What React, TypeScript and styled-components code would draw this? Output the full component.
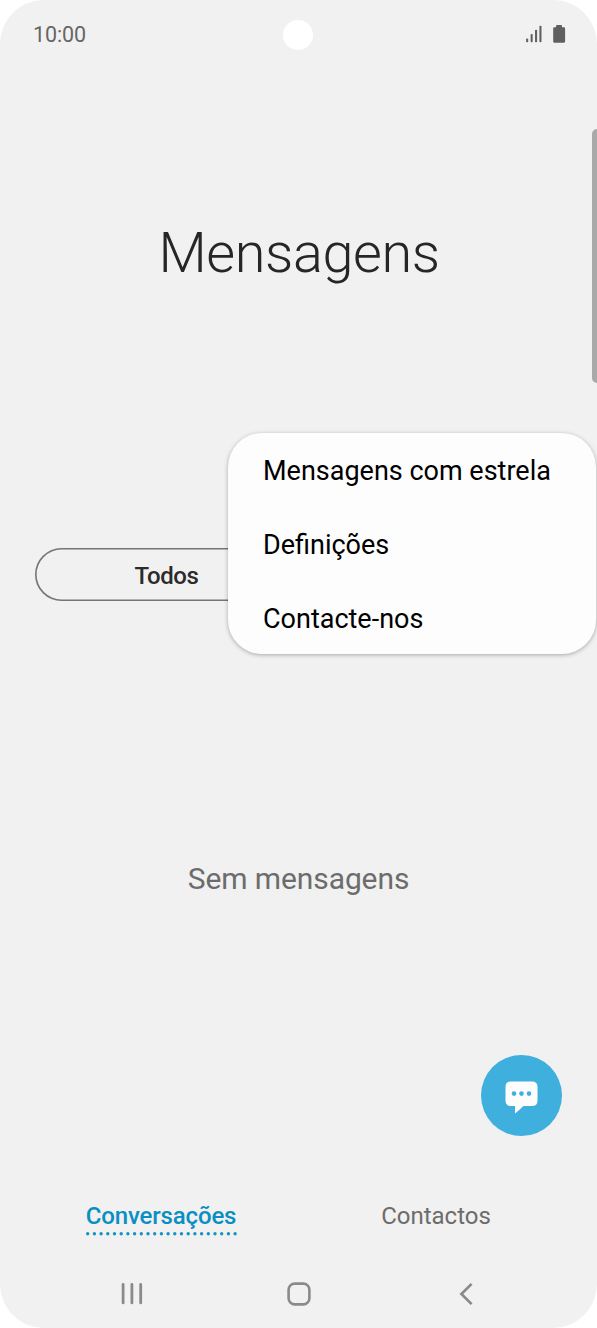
import React from 'react';
import styled, { createGlobalStyle } from 'styled-components';

const GlobalStyle = createGlobalStyle`
  * { box-sizing: border-box; }
  body { margin: 0; background: #fff; }
`;

const Phone = styled.main`
  position: relative;
  display: flex;
  flex-direction: column;
  width: 597px;
  height: 1328px;
  overflow: hidden;
  border-radius: 44px;
  background: #f1f1f1;
  font-family: Roboto, 'Liberation Sans', sans-serif;
`;

const StatusBar = styled.header`
  display: grid;
  grid-template-columns: 250px 30px 1fr;
  align-items: center;
  height: 70px;
  padding: 0 31px 0 33px;
`;

const Clock = styled.span`
  color: #666;
  font-size: 21.5px;
  letter-spacing: -0.1px;
  line-height: 26px;
`;

const Camera = styled.span`
  width: 30px;
  height: 30px;
  border-radius: 50%;
  background: #fff;
`;

const StatusIcons = styled.div`
  display: flex;
  justify-content: flex-end;
  align-items: center;
  gap: 10px;
  padding-bottom: 2px;
`;

const TitleArea = styled.section`
  display: flex;
  justify-content: center;
  align-items: center;
  height: 366px;
  padding-left: 1px;
`;

const Title = styled.h1`
  margin: 0;
  color: #262626;
  font-size: 55.8px;
  font-weight: 300;
  letter-spacing: -0.4px;
  line-height: 66px;
`;

const FilterArea = styled.section`
  height: 289px;
  padding: 112px 35px 0;
`;

const FilterPill = styled.div`
  display: flex;
  height: 53px;
  border-radius: 27px;
  box-shadow: inset 0 0 0 1.6px #757575;
`;

const FilterOption = styled.button`
  width: 263px;
  padding: 4px 0 0;
  border: 0;
  background: none;
  color: #2b2b2b;
  font: 500 24px/49px Roboto, sans-serif;
  letter-spacing: -0.4px;
`;

const EmptyState = styled.section`
  display: flex;
  justify-content: center;
  align-items: center;
  height: 330px;
  padding-bottom: 22px;
  color: #6c6c6c;
  font-size: 30px;
  letter-spacing: -0.1px;
  line-height: 36px;
`;

const ActionRow = styled.div`
  display: flex;
  flex: 1;
  justify-content: flex-end;
  padding-right: 35px;
`;

const ComposeButton = styled.button`
  display: flex;
  justify-content: center;
  align-items: center;
  width: 81px;
  height: 81px;
  padding: 3px 0 0;
  border: 0;
  border-radius: 50%;
  background: #3fb0de;
`;

const Tabs = styled.nav`
  display: grid;
  grid-template-columns: 275px 275px;
  justify-content: center;
  height: 64px;
`;

const Tab = styled.a<{ $active?: boolean }>`
  display: flex;
  flex-direction: column;
  align-items: center;
  gap: 2px;
  color: ${({ $active }) => ($active ? '#0a8fc4' : '#6c6c6c')};
  font-size: 24px;
  font-weight: ${({ $active }) => ($active ? 500 : 400)};
  letter-spacing: ${({ $active }) => ($active ? '-0.15px' : '0')};
  line-height: 28px;
`;

const NavBar = styled.footer`
  display: grid;
  grid-template-columns: repeat(3, 167px);
  justify-content: center;
  place-items: center;
  height: 55px;
  margin-bottom: 7px;
`;

const ScrollThumb = styled.div`
  position: absolute;
  top: 129px;
  right: -5px;
  width: 10.5px;
  height: 254px;
  border-radius: 5px;
  background: #a9a9a9;
`;

const Menu = styled.ul`
  position: absolute;
  top: 433px;
  left: 228px;
  display: flex;
  flex-direction: column;
  width: 368px;
  height: 221px;
  margin: 0;
  padding: 0 0 0 35px;
  border-radius: 34px;
  background: #fdfdfd;
  box-shadow: 0 1px 4px rgba(0, 0, 0, 0.3);
  list-style: none;
`;

const MenuItem = styled.li`
  height: 74px;
  color: #000;
  font-size: 27px;
  line-height: 77px;
  white-space: nowrap;
`;

const menuItems = ['Mensagens com estrela', 'Definições', 'Contacte-nos'];

const SignalIcon = () => (
  <svg width="17" height="18" viewBox="0 0 17 18" fill="#626262">
    <rect x="0.1" y="13.4" width="2.1" height="3.8" rx="0.8" />
    <rect x="4.6" y="9" width="2.1" height="8.2" rx="0.8" />
    <rect x="9" y="4.7" width="2.1" height="12.5" rx="0.8" />
    <rect x="13.4" y="0.7" width="2.1" height="16.5" rx="0.8" />
  </svg>
);

const BatteryIcon = () => (
  <svg width="13" height="19" viewBox="0 0 13 19" fill="#5f5f5f">
    <path d="M3.1 2.2V1Q3.1.1 3.9.1H8.2Q9 .1 9 1V2.2H11Q12.1 2.2 12.1 3.3V16.6Q12.1 17.7 11 17.7H1.3Q.2 17.7.2 16.6V3.3Q.2 2.2 1.3 2.2Z" />
  </svg>
);

const ChatIcon = () => (
  <svg width="33" height="33" viewBox="0 0 33 33">
    <path fill="#fdfdfd" d="M6 .5H27Q32.5.5 32.5 6V19.5Q32.5 25 27 25H18.5L10.8 32Q10 32.6 10 31.5V25H6Q.5 25 .5 19.5V6Q.5.5 6 .5Z" />
    <g fill="#3fb0de">
      <circle cx="9" cy="12.6" r="2.3" />
      <circle cx="16.5" cy="12.6" r="2.3" />
      <circle cx="24" cy="12.6" r="2.3" />
    </g>
  </svg>
);

const DottedLine = () => (
  <svg width="151" height="4" viewBox="0 0 151 4">
    <path d="M1.7 1.7H149.5" fill="none" stroke="#1593c3" strokeWidth="3.4" strokeLinecap="round" strokeDasharray="0 6.7" />
  </svg>
);

const RecentsIcon = () => (
  <svg width="23" height="24" viewBox="0 0 23 24" fill="none" stroke="#8a8a8a" strokeWidth="2.8" strokeLinecap="round">
    <path d="M3.1 2.5V20.9M11.9 2.5V20.9M20.7 2.5V20.9" />
  </svg>
);

const HomeIcon = () => (
  <svg width="24" height="24" viewBox="0 0 24 24" fill="none" stroke="#8a8a8a" strokeWidth="2.6">
    <rect x="1.6" y="1.6" width="20.8" height="20.8" rx="6.2" />
  </svg>
);

const BackIcon = () => (
  <svg width="14" height="24" viewBox="0 0 14 24" fill="none" stroke="#8a8a8a" strokeWidth="2.7">
    <path d="M12.6 1.9L2.4 12L12.6 22.1" />
  </svg>
);

export default function App() {
  return (
    <>
      <GlobalStyle />
      <Phone>
        <StatusBar>
          <Clock>10:00</Clock>
          <Camera />
          <StatusIcons>
            <SignalIcon />
            <BatteryIcon />
          </StatusIcons>
        </StatusBar>
        <TitleArea>
          <Title>Mensagens</Title>
        </TitleArea>
        <FilterArea>
          <FilterPill>
            <FilterOption>Todos</FilterOption>
          </FilterPill>
        </FilterArea>
        <EmptyState>Sem mensagens</EmptyState>
        <ActionRow>
          <ComposeButton aria-label="Nova mensagem">
            <ChatIcon />
          </ComposeButton>
        </ActionRow>
        <Tabs>
          <Tab $active>
            Conversações
            <DottedLine />
          </Tab>
          <Tab>Contactos</Tab>
        </Tabs>
        <NavBar>
          <RecentsIcon />
          <HomeIcon />
          <BackIcon />
        </NavBar>
        <ScrollThumb />
        <Menu>
          {menuItems.map((label) => (
            <MenuItem key={label}>{label}</MenuItem>
          ))}
        </Menu>
      </Phone>
    </>
  );
}
